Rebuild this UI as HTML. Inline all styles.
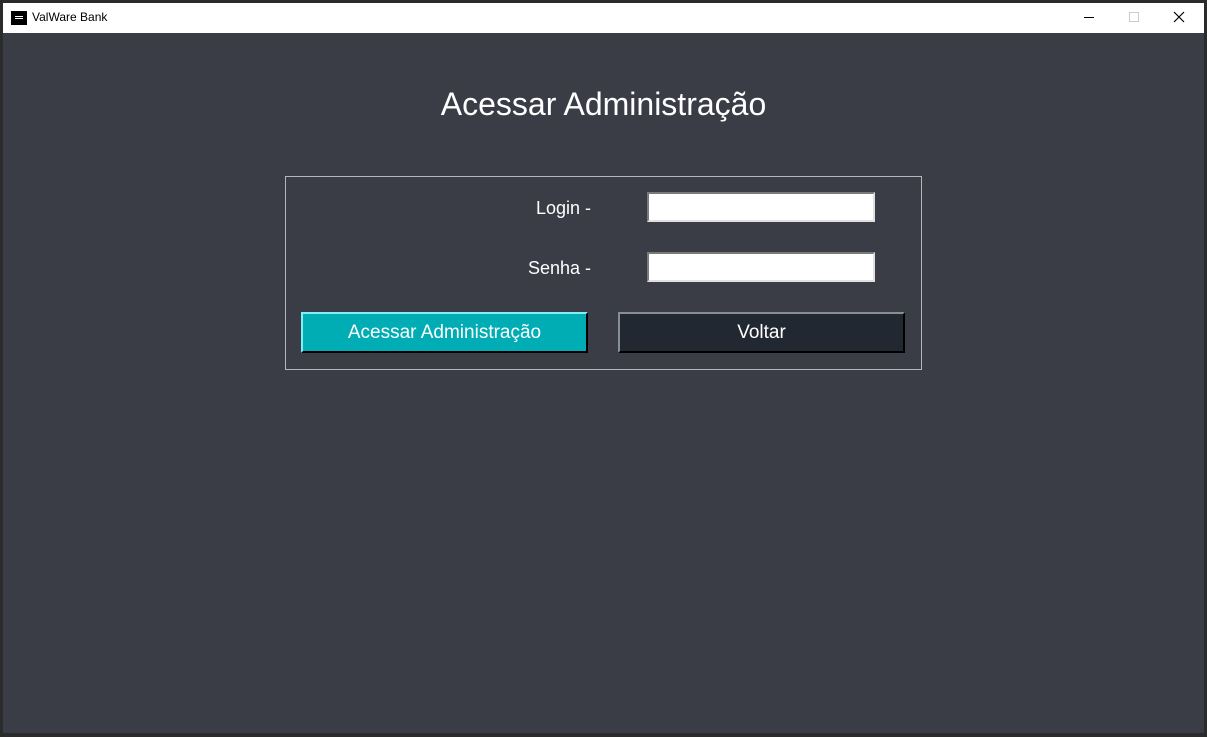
<!DOCTYPE html><html><head><style>
body{margin:0;width:1207px;height:737px;background:#2b2b2b;position:relative;overflow:hidden;font-family:"Liberation Sans",sans-serif}
.a{position:absolute;box-sizing:border-box}
</style></head><body>
<div class="a" style="left:3px;top:3px;width:1201px;height:30px;background:#fff"></div>
<div class="a" style="left:11px;top:11px;width:16px;height:14px;background:#000"><div class="a" style="left:4px;top:5px;width:8px;height:3px;border-top:1px solid #fff;border-bottom:1px solid #fff"></div></div>
<div class="a" style="left:32px;top:10px;font-size:12px;color:#000">ValWare Bank</div>
<div class="a" style="left:1084px;top:17px;width:10px;height:1px;background:#000"></div>
<div class="a" style="left:1129px;top:12px;width:10px;height:10px;border:1px solid #ccc"></div>
<svg class="a" style="left:1173px;top:11px" width="12" height="12"><path d="M1 1L11 11M11 1L1 11" stroke="#000" stroke-width="1.2"/></svg>
<div class="a" style="left:3px;top:33px;width:1201px;height:700px;background:#3a3d46"></div>
<div class="a" style="left:0;width:1207px;text-align:center;font-size:32px;color:#fff;line-height:1;top:88px">Acessar Administração</div>
<div class="a" style="left:285px;top:176px;width:637px;height:194px;border:1px solid #b4b6bb"></div>
<div class="a" style="left:400px;top:198px;width:191px;text-align:right;font-size:18px;color:#fff">Login -</div>
<div class="a" style="left:400px;top:258px;width:191px;text-align:right;font-size:18px;color:#fff">Senha -</div>
<div class="a" style="left:647px;top:192px;width:228px;height:30px;background:#fff;border:2px solid;border-color:#7a7a7a #e0e0e0 #e0e0e0 #7a7a7a"></div>
<div class="a" style="left:647px;top:252px;width:228px;height:30px;background:#fff;border:2px solid;border-color:#7a7a7a #e0e0e0 #e0e0e0 #7a7a7a"></div>
<div class="a" style="left:301px;top:312px;width:287px;height:41px;background:#00adb5;border:2px solid;border-color:#7ff0f5 #000 #000 #7ff0f5;color:#fff;font-size:19px;text-align:center;line-height:37px">Acessar Administração</div>
<div class="a" style="left:618px;top:312px;width:287px;height:41px;background:#222831;border:2px solid;border-color:#8a8d92 #000 #000 #8a8d92;color:#fff;font-size:19px;text-align:center;line-height:37px">Voltar</div>
</body></html>
